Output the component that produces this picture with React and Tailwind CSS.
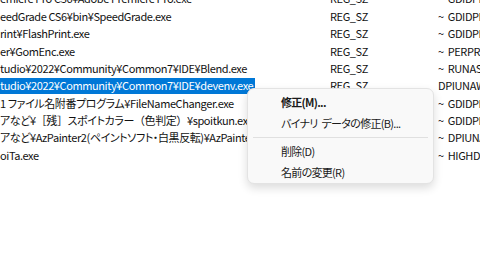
const Full = ({ children }) => <span className="[font-feature-settings:normal]">{children}</span>;

const rows = [
  { name: 'emiere Pro CS6¥Adobe Premiere Pro.exe', type: 'REG_SZ', data: 'GDIDPISCALING DPIUNAWARE', tilde: true },
  { name: 'eedGrade CS6¥bin¥SpeedGrade.exe', type: 'REG_SZ', data: 'GDIDPISCALING DPIUNAWARE', tilde: true },
  { name: 'rint¥FlashPrint.exe', type: 'REG_SZ', data: 'GDIDPISCALING DPIUNAWARE', tilde: true },
  { name: 'er¥GomEnc.exe', type: 'REG_SZ', data: 'PERPROCESSSYSTEMDPIFORCEOFF', tilde: true },
  { name: 'tudio¥2022¥Community¥Common7¥IDE¥Blend.exe', type: 'REG_SZ', data: 'RUNASADMIN', tilde: true },
  { name: 'tudio¥2022¥Community¥Common7¥IDE¥devenv.exe', type: 'REG_SZ', data: 'DPIUNAWARE', selected: true },
  { name: '1 ファイル名附番プログラム¥FileNameChanger.exe', type: 'REG_SZ', data: 'GDIDPISCALING DPIUNAWARE', tilde: true },
  {
    name: (
      <>
        アなど¥<Full>［残］</Full>スポイトカラー<Full>（色判定）</Full>¥spoitkun.exe
      </>
    ),
    type: 'REG_SZ',
    data: 'GDIDPISCALING DPIUNAWARE',
    tilde: true,
  },
  { name: 'アなど¥AzPainter2(ペイントソフト・白黒反転)¥AzPainter2.exe', type: 'REG_SZ', data: 'DPIUNAWARE', tilde: true },
  { name: 'oiTa.exe', type: 'REG_SZ', data: 'HIGHDPIAWARE', tilde: true },
];

function Row({ row }) {
  return (
    <div className="flex items-center h-[17.375px] whitespace-nowrap">
      <div className="w-[330px] shrink-0 overflow-hidden">
        {row.selected ? (
          <span className="flex items-center w-[255px] h-[16px] bg-[#0078d7] text-white">
            {row.name}
          </span>
        ) : (
          <span className="text-[#111]">{row.name}</span>
        )}
      </div>
      <div className="w-[108px] shrink-0 text-[#111]">{row.type}</div>
      <div className="flex-1 overflow-hidden text-[#111]">
        {row.tilde && <span className="mr-[4px]">~</span>}
        {row.data}
      </div>
    </div>
  );
}

function MenuItem({ children, bold }) {
  return (
    <div className={`flex items-center h-[20.5px] pl-[33px] text-[#1a1a1a] ${bold ? 'font-bold' : ''}`}>
      {children}
    </div>
  );
}

export default function App() {
  return (
    <div
      className="relative w-[480px] h-[270px] overflow-hidden bg-white text-[11px] [font-feature-settings:'palt']"
      style={{ fontFamily: '"Noto Sans CJK JP", "Noto Sans", sans-serif' }}
    >
      <div className="-mt-[10px] tracking-[-0.4px]">
        {rows.map((r, i) => (
          <Row key={i} row={r} />
        ))}
      </div>

      {/* context menu */}
      <div className="absolute left-[247px] top-[88px] w-[187px] pt-[3px] pb-[1px] bg-[#f9f9f9] border border-[#e3e3e3] rounded-[7px] shadow-[0_4px_10px_rgba(0,0,0,0.14)] tracking-[-0.7px]">
        <MenuItem bold>修正(M)...</MenuItem>
        <MenuItem>
          バイナリ<span className="w-[4px]" />データの修正(B)...
        </MenuItem>
        <div className="h-[8px] flex items-center mx-[5px]">
          <div className="w-full h-px bg-[#e0e0e0]" />
        </div>
        <MenuItem>削除(D)</MenuItem>
        <MenuItem>名前の変更(R)</MenuItem>
      </div>
    </div>
  );
}
